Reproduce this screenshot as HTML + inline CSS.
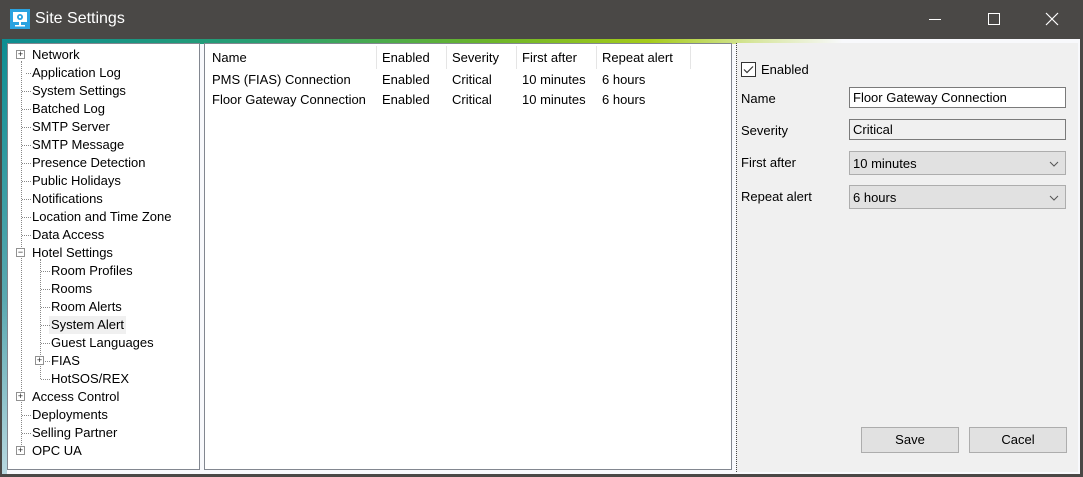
<!DOCTYPE html>
<html><head><style>
*{margin:0;padding:0;box-sizing:border-box}
body{width:1083px;height:477px;overflow:hidden;background:#4a4846;font-family:"Liberation Sans",Arial,sans-serif;font-size:13px;color:#000;position:relative}
.title{position:absolute;left:0;top:0;width:1083px;height:39px;background:#4a4846;color:#fff}
.title .t{position:absolute;left:35px;top:10px;font-size:16px}
.client{position:absolute;left:2px;top:39px;width:1078px;height:435px;background:#f8f9fc}
.band{position:absolute;left:2px;top:39px;width:1078px;height:5px;background:linear-gradient(90deg,#0d8d92 0%,#2aa070 25%,#6bb52a 45%,#a6cc1a 60%,#d8e6a0 70%,#f8f9fc 78%)}
.edge{position:absolute;left:2px;top:39px;width:5px;height:435px;background:linear-gradient(180deg,#0d8d92,#5aa8b0 60%,#b8d8e0)}
.box{position:absolute;background:#fff;border:1px solid #828790}
.tree div{position:absolute;height:18px;line-height:18px;white-space:nowrap}
.pm{position:absolute;width:9px;height:9px;border:1px solid #919191;background:#fff;font-size:9px;line-height:7px;text-align:center;color:#222}
.vl{position:absolute;border-left:1px dotted #888}
.hl{position:absolute;border-top:1px dotted #888;height:0}
.lv div{position:absolute;white-space:nowrap}
.right{position:absolute;left:736px;top:43px;width:342px;height:429px;background:#f0f0f0;border-left:1px dotted #444}
.in{position:absolute;left:112px;width:217px;height:21px;border:1px solid #7a7a7a;padding:2px 3px;font-size:13px;line-height:15px;background:#fff}
.cb{background:#e1e1e1;border-color:#adadad;height:24px;padding-top:4px}
.cb svg{position:absolute;right:6px;top:9px}
.btn{position:absolute;top:384px;width:98px;height:26px;background:#e1e1e1;border:1px solid #adadad;text-align:center;line-height:24px}
</style></head><body>
<div class="title">
<svg style="position:absolute;left:10px;top:9px" width="20" height="20"><rect width="20" height="20" fill="#2ba3e0"/><rect x="3" y="3" width="14" height="10" fill="#fff"/><circle cx="10" cy="8" r="3" fill="#2ba3e0"/><circle cx="10" cy="8" r="1.2" fill="#fff"/><rect x="9" y="13" width="2" height="3" fill="#fff"/><rect x="5" y="16" width="10" height="1.5" fill="#fff"/></svg>
<div class="t">Site Settings</div>
<svg style="position:absolute;left:928px;top:12px" width="140" height="16"><line x1="1" y1="7.5" x2="13" y2="7.5" stroke="#fff"/><rect x="60.5" y="1.5" width="11" height="11" fill="none" stroke="#fff"/><path d="M118 1l12 12M130 1l-12 12" stroke="#fff" stroke-width="1.2"/></svg>
</div>
<div class="client"></div>
<div class="band"></div>
<div class="edge"></div>

<div class="box tree" style="left:7px;top:43px;width:193px;height:427px">
<div class="vl" style="left:13px;top:17px;height:390px"></div>
<div class="vl" style="left:32px;top:215px;height:120px"></div>
<div style="left:24px;top:2px">Network</div>
<div style="left:24px;top:20px">Application Log</div>
<div style="left:24px;top:38px">System Settings</div>
<div style="left:24px;top:56px">Batched Log</div>
<div style="left:24px;top:74px">SMTP Server</div>
<div style="left:24px;top:92px">SMTP Message</div>
<div style="left:24px;top:110px">Presence Detection</div>
<div style="left:24px;top:128px">Public Holidays</div>
<div style="left:24px;top:146px">Notifications</div>
<div style="left:24px;top:164px">Location and Time Zone</div>
<div style="left:24px;top:182px">Data Access</div>
<div style="left:24px;top:200px">Hotel Settings</div>
<div style="left:43px;top:218px">Room Profiles</div>
<div style="left:43px;top:236px">Rooms</div>
<div style="left:43px;top:254px">Room Alerts</div>
<div style="left:41px;top:272px;background:#f0f0f0;padding:0 2px">System Alert</div>
<div style="left:43px;top:290px">Guest Languages</div>
<div style="left:43px;top:308px">FIAS</div>
<div style="left:43px;top:326px">HotSOS/REX</div>
<div style="left:24px;top:344px">Access Control</div>
<div style="left:24px;top:362px">Deployments</div>
<div style="left:24px;top:380px">Selling Partner</div>
<div style="left:24px;top:398px">OPC UA</div>
<span class="hl" style="left:18px;top:29px;width:5px"></span><span class="hl" style="left:14px;top:47px;width:9px"></span><span class="hl" style="left:14px;top:65px;width:9px"></span><span class="hl" style="left:14px;top:83px;width:9px"></span><span class="hl" style="left:14px;top:101px;width:9px"></span><span class="hl" style="left:14px;top:119px;width:9px"></span><span class="hl" style="left:14px;top:137px;width:9px"></span><span class="hl" style="left:14px;top:155px;width:9px"></span><span class="hl" style="left:14px;top:173px;width:9px"></span><span class="hl" style="left:14px;top:191px;width:9px"></span>
<span class="hl" style="left:33px;top:227px;width:9px"></span><span class="hl" style="left:33px;top:245px;width:9px"></span><span class="hl" style="left:33px;top:263px;width:9px"></span><span class="hl" style="left:33px;top:281px;width:9px"></span><span class="hl" style="left:33px;top:299px;width:9px"></span><span class="hl" style="left:37px;top:317px;width:5px"></span><span class="hl" style="left:33px;top:335px;width:9px"></span>
<span class="hl" style="left:14px;top:371px;width:9px"></span><span class="hl" style="left:14px;top:389px;width:9px"></span>
<span class="pm" style="left:8px;top:6px">+</span>
<span class="pm" style="left:8px;top:204px">−</span>
<span class="pm" style="left:27px;top:312px">+</span>
<span class="pm" style="left:8px;top:348px">+</span>
<span class="pm" style="left:8px;top:402px">+</span>
</div>

<div class="box lv" style="left:204px;top:43px;width:528px;height:427px">
<div style="left:171px;top:2px;height:23px;border-left:1px solid #e5e5e5"></div>
<div style="left:241px;top:2px;height:23px;border-left:1px solid #e5e5e5"></div>
<div style="left:311px;top:2px;height:23px;border-left:1px solid #e5e5e5"></div>
<div style="left:391px;top:2px;height:23px;border-left:1px solid #e5e5e5"></div>
<div style="left:485px;top:2px;height:23px;border-left:1px solid #e5e5e5"></div>
<div style="left:7px;top:6px">Name</div><div style="left:177px;top:6px">Enabled</div><div style="left:247px;top:6px">Severity</div><div style="left:317px;top:6px">First after</div><div style="left:397px;top:6px">Repeat alert</div>
<div style="left:7px;top:28px">PMS (FIAS) Connection</div><div style="left:177px;top:28px">Enabled</div><div style="left:247px;top:28px">Critical</div><div style="left:317px;top:28px">10 minutes</div><div style="left:397px;top:28px">6 hours</div>
<div style="left:7px;top:48px">Floor Gateway Connection</div><div style="left:177px;top:48px">Enabled</div><div style="left:247px;top:48px">Critical</div><div style="left:317px;top:48px">10 minutes</div><div style="left:397px;top:48px">6 hours</div>
</div>

<div class="right">
<svg style="position:absolute;left:4px;top:19px" width="15" height="15"><rect x="0.5" y="0.5" width="14" height="14" fill="#fff" stroke="#333"/><path d="M3 7.5l3 3 6-6" fill="none" stroke="#333" stroke-width="1.2"/></svg>
<div style="position:absolute;left:24px;top:19px">Enabled</div>
<div style="position:absolute;left:4px;top:48px">Name</div>
<div class="in" style="top:44px">Floor Gateway Connection</div>
<div style="position:absolute;left:4px;top:80px">Severity</div>
<div class="in" style="top:76px;background:#f0f0f0">Critical</div>
<div style="position:absolute;left:4px;top:112px">First after</div>
<div class="in cb" style="top:108px">10 minutes<svg width="10" height="6"><path d="M1 1l4 4 4-4" fill="none" stroke="#555"/></svg></div>
<div style="position:absolute;left:4px;top:146px">Repeat alert</div>
<div class="in cb" style="top:142px">6 hours<svg width="10" height="6"><path d="M1 1l4 4 4-4" fill="none" stroke="#555"/></svg></div>
<div class="btn" style="left:124px">Save</div>
<div class="btn" style="left:232px">Cacel</div>
</div>
</body></html>
